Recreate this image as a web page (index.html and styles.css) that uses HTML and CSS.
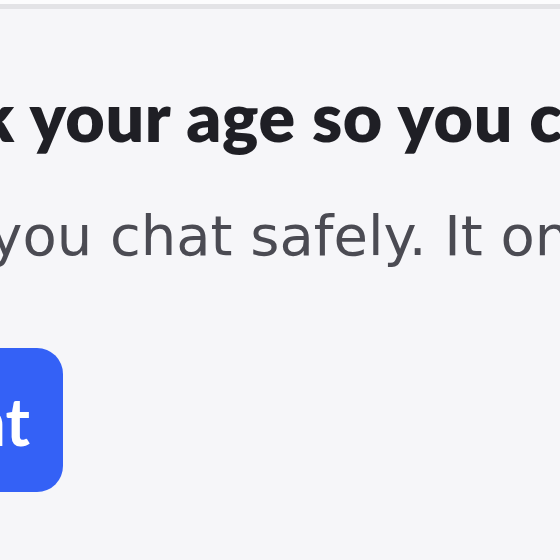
FILE: index.html
```html
<!DOCTYPE html>
<html>
<head>
<meta charset="utf-8">
<link rel="stylesheet" href="styles.css">
</head>
<body>
<div class="topbar"></div>
<main class="panel">
  <h1 class="title">Let's check your age so you can chat</h1>
  <p class="lead">This helps you chat safely. It only takes a moment.</p>
  <div class="actions">
    <button class="btn">Consent</button>
  </div>
</main>
</body>
</html>
```
FILE: styles.css
```css
html, body {
  margin: 0;
  padding: 0;
  width: 560px;
  height: 560px;
  overflow: hidden;
  background: #f6f6f9;
}
.topbar {
  height: 4px;
  background: #fcfcfd;
  border-bottom: 5px solid #e3e3e6;
}
.panel {
  display: flex;
  flex-direction: column;
  align-items: flex-start;
  white-space: nowrap;
}
.title {
  margin: 67px 0 0 -328px;
  font-family: Lato, "Liberation Sans", sans-serif;
  font-size: 68px;
  line-height: 80px;
  font-weight: 800;
  letter-spacing: 0.6px;
  color: #1f1f25;
}
.lead {
  margin: 46px 0 0 -311px;
  font-family: "DejaVu Sans", sans-serif;
  font-size: 56px;
  line-height: 68px;
  font-weight: 400;
  color: #4b4b53;
}
.actions {
  margin: 78px 0 0 -237px;
}
.btn {
  display: block;
  width: 300px;
  height: 144px;
  border: 0;
  border-radius: 26px;
  background: #3461f6;
  color: #fff;
  font-family: Lato, "Liberation Sans", sans-serif;
  font-size: 66px;
  font-weight: 700;
  padding: 0 33px 0 0;
  text-align: right;
}
```
